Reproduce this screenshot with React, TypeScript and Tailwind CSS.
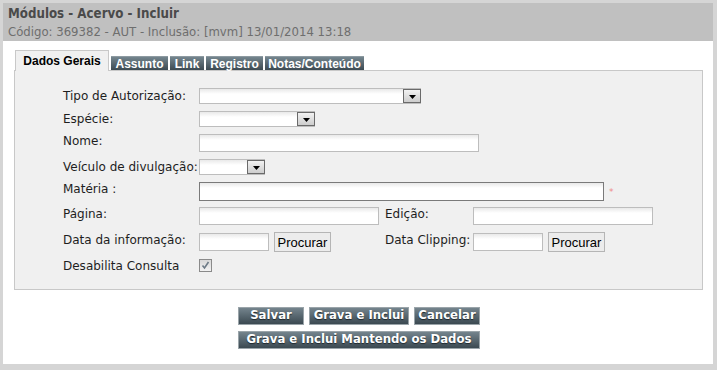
import React from 'react';

const txt = "shrink-0 whitespace-nowrap font-['DejaVu_Sans',Verdana,sans-serif] text-[12px] text-[#1e1e1e] leading-[14px]";
const field = "shrink-0 h-[18px] border border-[#bdbdbd] bg-[linear-gradient(#e9e9e9,#ffffff_5px)]";

const Arrow = () => (
  <svg width="7" height="4" viewBox="0 0 7 4">
    <path d="M0 0h7L3.5 4z" fill="#000" />
  </svg>
);

const Select: React.FC<{ className: string }> = ({ className }) => (
  <div className={`${className} shrink-0 h-[16px] flex border-y border-l border-[#bdbdbd] bg-[linear-gradient(#e9e9e9,#ffffff_5px)]`}>
    <div className="flex-1" />
    <div className="w-[18px] h-full border border-[#6a6a6a] bg-[linear-gradient(#f2f2f2,#cdcdcd)] flex items-end justify-center pb-[3px]">
      <Arrow />
    </div>
  </div>
);

const Procurar = () => (
  <button className="shrink-0 ml-[5px] w-[57px] h-[20px] border border-[#b5b5b5] bg-[#ececec] font-['Liberation_Sans',Arial,sans-serif] text-[13px] text-black leading-none">
    Procurar
  </button>
);

const tabDark =
  "h-[14px] flex items-center justify-center border-t border-[#8d9aa1] bg-[linear-gradient(#74858e,#3c4a52)] font-['Liberation_Sans',Arial,sans-serif] font-bold text-[12px] text-white leading-none";

const btn =
  "h-[18px] flex items-center justify-center border border-[#9aa4a9] bg-[linear-gradient(#74848d,#3b4951)] font-['DejaVu_Sans',Verdana,sans-serif] font-bold text-[11.7px] text-white leading-none [text-shadow:0_1px_1px_#1e272c]";

export default function App() {
  return (
    <div className="w-[717px] h-[370px] bg-[#d5d5d5] pt-[3px] pl-[3px] pr-[4px] pb-[6px]">
      <div className="h-full bg-white flex flex-col">
        <header className="h-[38px] bg-[#c0c0c0] pl-[5px] pt-[3px]">
          <h1 className="font-['DejaVu_Sans_Condensed','DejaVu_Sans',sans-serif] font-bold text-[13.2px] leading-[16px] text-[#4a4a4a]">
            Módulos - Acervo - Incluir
          </h1>
          <p className="mt-[2px] font-['DejaVu_Sans_Condensed','DejaVu_Sans',sans-serif] text-[13px] leading-[15px] text-[#6e6e6e]">
            Código: 369382 - AUT - Inclusão: [mvm] 13/01/2014 13:18
          </p>
        </header>

        <div className="pl-[11px] pr-[10px] pt-[9px]">
          <div className="flex items-end h-[20px] pl-[1px] gap-[2px]">
            <div className="relative z-10 mb-[-1px] w-[94px] h-[21px] border-x border-t border-[#c8c8c8] bg-[#f0f0f0] flex items-end justify-center pb-[4px] font-['Liberation_Sans',Arial,sans-serif] font-bold text-[12px] text-black leading-none">
              Dados Gerais
            </div>
            <div className={`${tabDark} w-[57px]`}>Assunto</div>
            <div className={`${tabDark} w-[34px]`}>Link</div>
            <div className={`${tabDark} w-[57px]`}>Registro</div>
            <div className={`${tabDark} w-[99px]`}>Notas/Conteúdo</div>
          </div>

          <div className="h-[220px] border border-[#c8c8c8] bg-[#f0f0f0] pl-[48px] pt-[17px] flex flex-col gap-[7px]">
            <div className="flex items-center h-[16px]">
              <span className={`${txt} w-[136px]`}>Tipo de Autorização:</span>
              <Select className="w-[222px]" />
            </div>
            <div className="flex items-center h-[16px]">
              <span className={`${txt} w-[136px]`}>Espécie:</span>
              <Select className="w-[116px]" />
            </div>
            <div className="flex items-center h-[18px]">
              <span className={`${txt} w-[136px] -mt-[4px]`}>Nome:</span>
              <div className={`${field} w-[280px]`} />
            </div>
            <div className="flex items-center h-[16px]">
              <span className={`${txt} w-[136px]`}>Veículo de divulgação:</span>
              <Select className="w-[66px]" />
            </div>
            <div className="flex items-center h-[19px]">
              <span className={`${txt} w-[136px] -mt-[5px]`}>Matéria :</span>
              <div className="shrink-0 h-[19px] w-[405px] border border-[#7a7a7a] bg-[linear-gradient(#e9e9e9,#ffffff_5px)]" />
              <span className="ml-[5px] mt-[1px] text-[#ef8a8a] text-[9px] font-['DejaVu_Sans',sans-serif] leading-none">*</span>
            </div>
            <div className="flex items-center h-[18px] -mt-[1px]">
              <span className={`${txt} w-[136px] -mt-[4px]`}>Página:</span>
              <div className="w-[186px] shrink-0">
                <div className={`${field} w-[180px]`} />
              </div>
              <span className={`${txt} w-[88px] -mt-[4px]`}>Edição:</span>
              <div className={`${field} w-[180px]`} />
            </div>
            <div className="flex items-center h-[20px]">
              <span className={`${txt} w-[136px] -mt-[4px]`}>Data da informação:</span>
              <div className="w-[186px] shrink-0 flex items-center">
                <div className={`${field} w-[70px]`} />
                <Procurar />
              </div>
              <span className={`${txt} w-[88px] -mt-[4px]`}>Data Clipping:</span>
              <div className={`${field} w-[70px]`} />
              <Procurar />
            </div>
            <div className="flex items-center h-[13px]">
              <span className={`${txt} w-[136px]`}>Desabilita Consulta</span>
              <div className="w-[13px] h-[13px] border border-[#8a8a8a] bg-[linear-gradient(#d8d8d8,#f2f2f2)] flex items-center justify-center">
                <svg width="9" height="9" viewBox="0 0 9 9">
                  <path d="M1.5 4.5 L3.5 7 L7.5 1" fill="none" stroke="#6c7a86" strokeWidth="1.6" />
                </svg>
              </div>
            </div>
          </div>
        </div>

        <div className="mt-[17px] flex flex-col items-center gap-[6px] pl-[2px]">
          <div className="flex gap-[5px]">
            <button className={`${btn} w-[66px]`}>Salvar</button>
            <button className={`${btn} w-[100px]`}>Grava e Inclui</button>
            <button className={`${btn} w-[66px]`}>Cancelar</button>
          </div>
          <button className={`${btn} w-[242px]`}>Grava e Inclui Mantendo os Dados</button>
        </div>
      </div>
    </div>
  );
}
